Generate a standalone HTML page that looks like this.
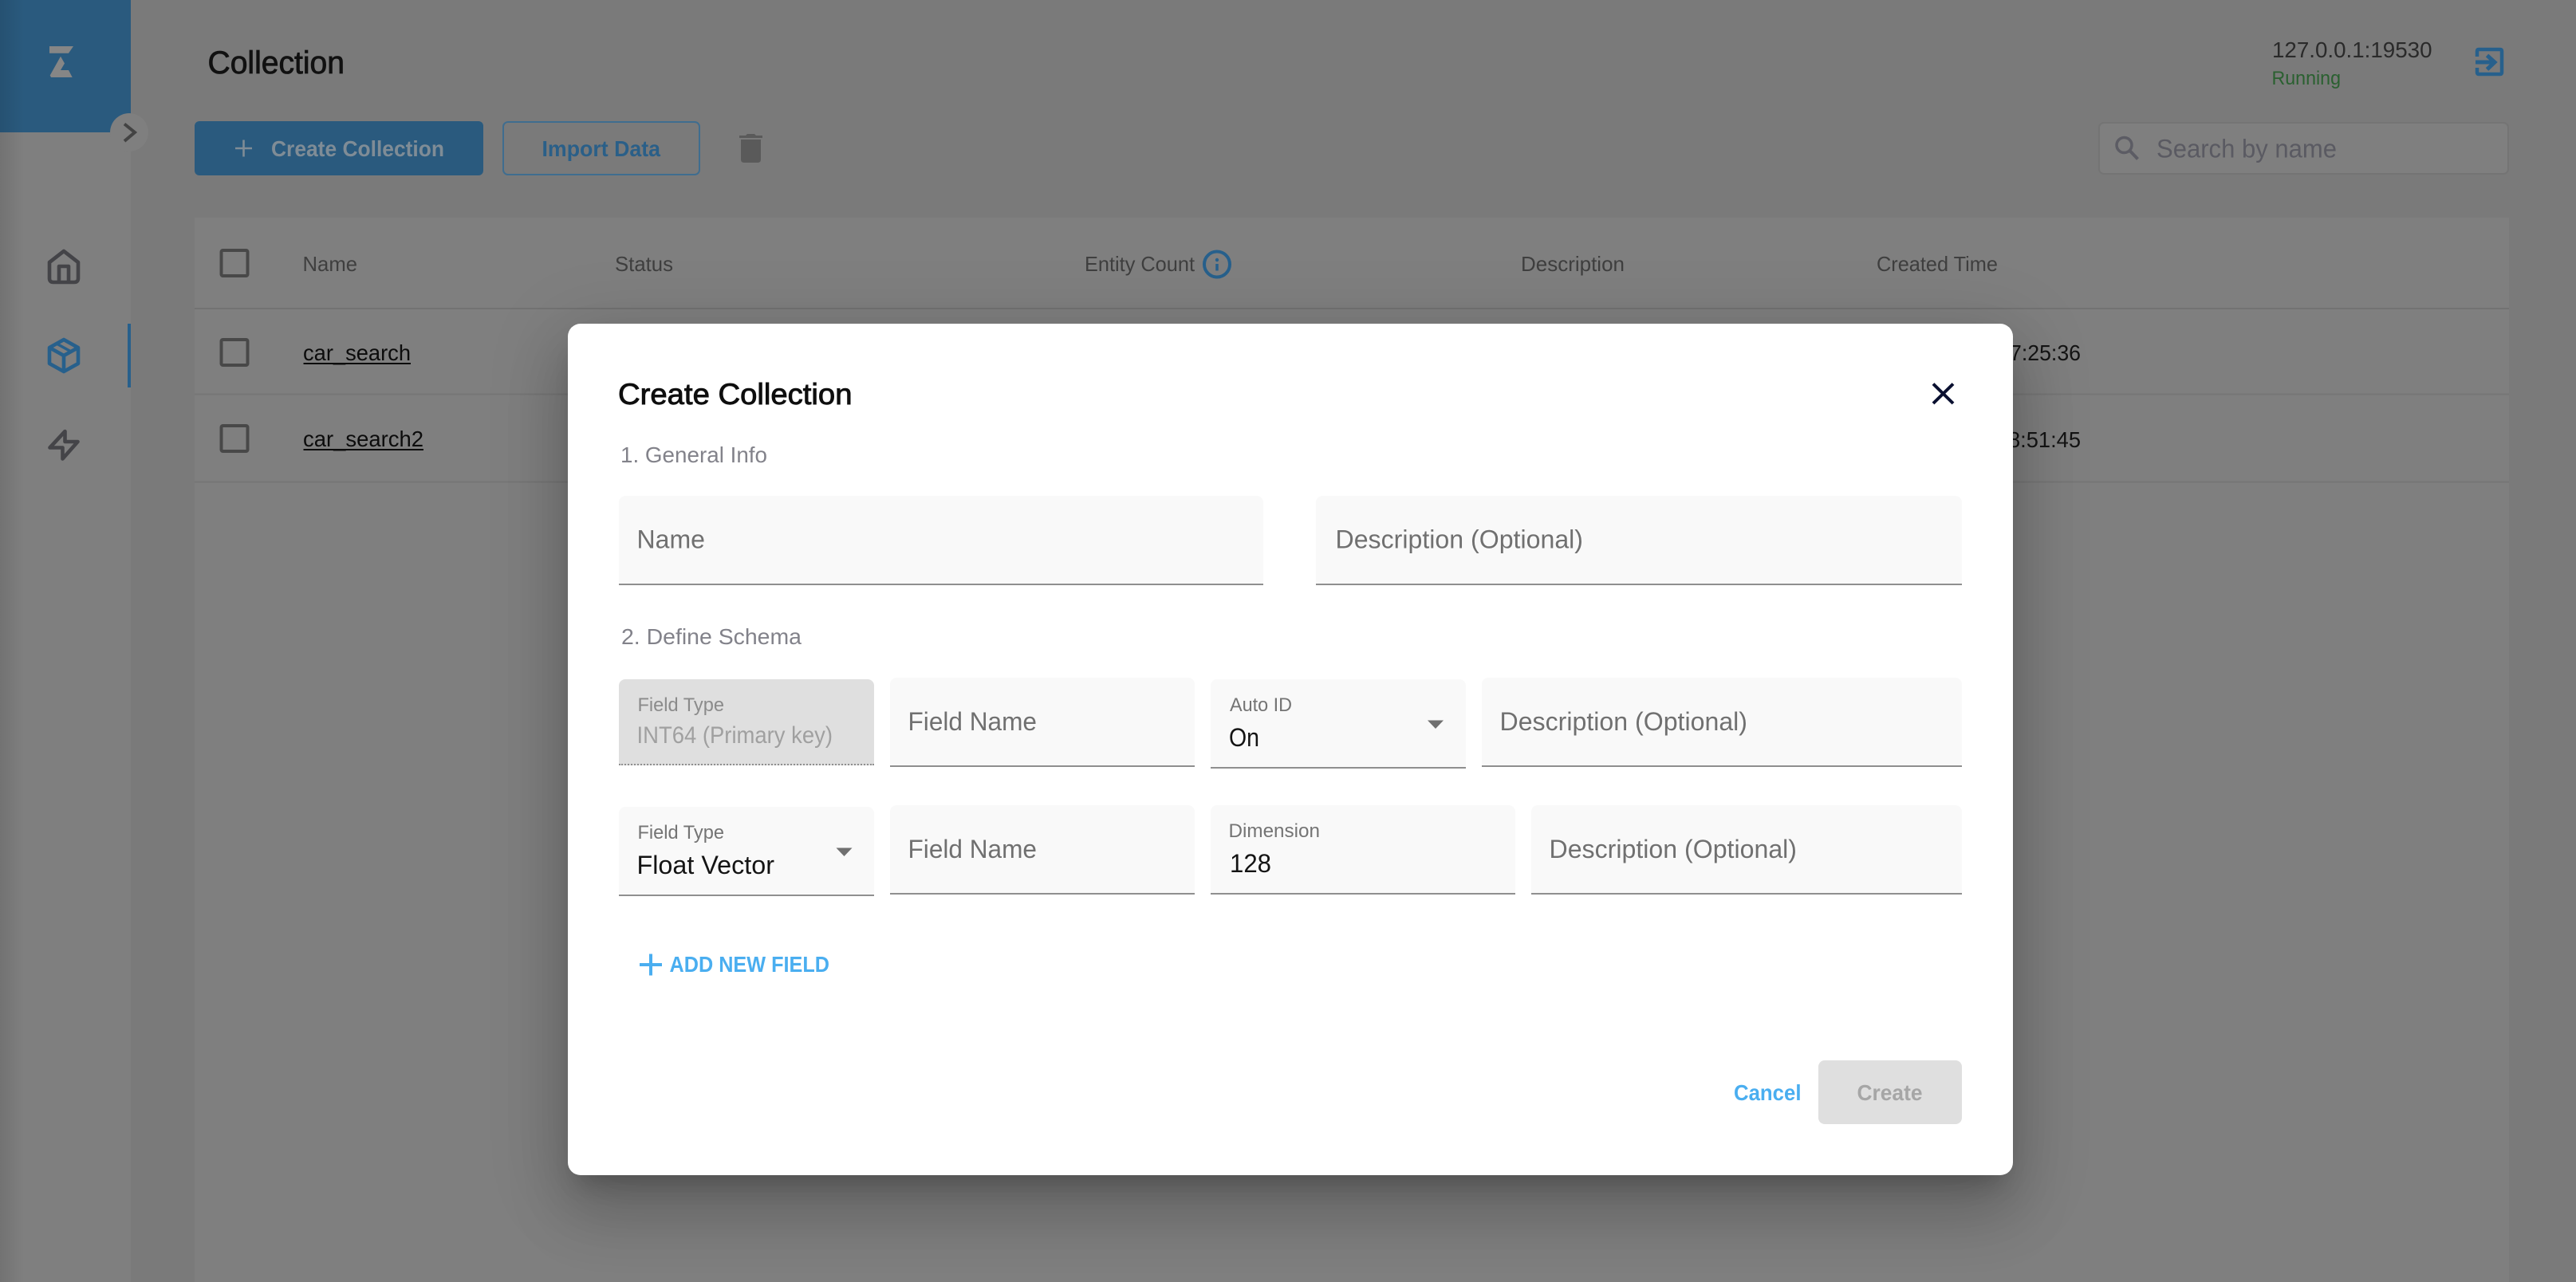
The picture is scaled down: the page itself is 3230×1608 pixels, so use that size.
<!DOCTYPE html>
<html lang="en">
<head>
<meta charset="utf-8">
<title>Collection</title>
<style>
html,body{margin:0;padding:0;width:3230px;height:1608px;overflow:hidden;background:#7a7a7a}
svg{position:absolute;left:0;top:0}
text{font-family:"Liberation Sans",sans-serif;white-space:pre}
.dialog{position:absolute;left:712px;top:406px;width:1812px;height:1068px;background:#fff;border-radius:16px;
box-shadow:0 22px 30px -14px rgba(0,0,0,.2),0 48px 76px 6px rgba(0,0,0,.14),0 18px 92px 16px rgba(0,0,0,.12)}
.f{position:absolute;box-sizing:border-box;background:#f9f9f9;border-radius:8px 8px 0 0;border-bottom:2px solid #8f8f8f}
.d{background:#dfdfdf;border-bottom:2px dotted #8f8f8f}
.b{position:absolute;left:2280px;top:1330px;width:180px;height:80px;background:#dfdfdf;border-radius:8px}
</style>
</head>
<body>
<svg width="3230" height="1608" viewBox="0 0 3230 1608">
<defs>
<linearGradient id="edge" x1="0" x2="1" y1="0" y2="0"><stop offset="0" stop-color="#000" stop-opacity=".1"/><stop offset="1" stop-color="#000" stop-opacity="0"/></linearGradient>
</defs>
<rect width="3230" height="1608" fill="#7a7a7a"/>
<rect width="164" height="1608" fill="#7f7f7f"/>
<rect y="0" width="164" height="166" fill="#2a5a7e"/>
<rect width="30" height="1608" fill="url(#edge)"/>
<circle cx="162" cy="166" r="24" fill="#7f7f7f"/>
<path d="M156 155.5L169 166L156 177" fill="none" stroke="#434343" stroke-width="4"/>
<path d="M62 58H92L86 66.7H62Z" fill="#868686"/>
<path d="M76 70.7L81 79.5L76 88H86L90.7 97H64L62.7 94.5Z" fill="#868686"/>
<g fill="none" stroke="#444448" stroke-width="4.6" stroke-linejoin="round">
<path d="M80 315L98 329V349Q98 354 93 354H67Q62 354 62 349V329Z"/>
<path d="M74 354V334H86V354"/>
<path d="M81.500 541V554H97.500L78.500 575.500V561.500H62.500Z"/>
</g>
<g fill="none" stroke="#27608c" stroke-width="4.6" stroke-linejoin="round">
<path d="M80 426L98 436V456L80 466L62 456V436Z"/>
<path d="M62 436L80 446L98 436M80 446V466"/>
<path d="M71 431L89 441" stroke-width="3.500"/>
</g>
<rect x="160" y="406" width="4" height="80" fill="#27608c"/>

<text x="260.500" y="92" font-size="40" fill="#111" stroke="#111" stroke-width=".8" textLength="171.500" lengthAdjust="spacingAndGlyphs">Collection</text>

<rect x="244" y="152" width="362" height="68" rx="6" fill="#2a5a7e"/>
<path d="M305.5 175.5V196.500M295 186H316" stroke="#7f8c96" stroke-width="2.6" fill="none"/>
<text x="340" y="196" font-size="28" font-weight="700" fill="#7f8c96" textLength="217" lengthAdjust="spacingAndGlyphs">Create Collection</text>
<rect x="631" y="153" width="246" height="66" rx="6" fill="none" stroke="#3f6d8f" stroke-width="2"/>
<text x="679.500" y="196" font-size="28" font-weight="700" fill="#2a5f88" textLength="148.500" lengthAdjust="spacingAndGlyphs">Import Data</text>
<path d="M929 175H954V200Q954 204 950 204H933Q929 204 929 200ZM927 170H935L937 168H946L948 170H956V173H927Z" fill="#5a5a5a"/>

<text x="2849" y="72" font-size="28" fill="#2a2a2a" textLength="200.500" lengthAdjust="spacingAndGlyphs">127.0.0.1:19530</text>
<text x="2848.500" y="106" font-size="24" fill="#2a6030" textLength="86.500" lengthAdjust="spacingAndGlyphs">Running</text>
<path d="M3106 71V64Q3106 62 3108 62H3135Q3137 62 3137 64V91Q3137 93 3135 93H3108Q3106 93 3106 91V85" fill="none" stroke="#27608c" stroke-width="4.500"/>
<path d="M3104 78H3128M3118.500 69.500L3128 78L3118.500 87" fill="none" stroke="#27608c" stroke-width="5"/>

<rect x="2632" y="154" width="513" height="64" rx="6" fill="#7f7f7f" stroke="#747474" stroke-width="2"/>
<circle cx="2663.500" cy="182" r="9.500" fill="none" stroke="#5c5c64" stroke-width="3.500"/>
<path d="M2670.500 189L2680.500 199.500" stroke="#5c5c64" stroke-width="4"/>
<text x="2704" y="197.500" font-size="32" fill="#5a5a62" textLength="226" lengthAdjust="spacingAndGlyphs">Search by name</text>

<rect x="244" y="273" width="2902" height="1335" fill="#7f7f7f"/>
<rect x="244" y="386" width="2902" height="2" fill="#727272"/>
<rect x="244" y="493.500" width="2902" height="2" fill="#767676"/>
<rect x="244" y="603.500" width="2902" height="2" fill="#767676"/>
<g fill="none" stroke="#484848" stroke-width="4">
<rect x="277.500" y="314" width="33" height="32" rx="2"/>
<rect x="277.500" y="426" width="33" height="32" rx="2"/>
<rect x="277.500" y="534" width="33" height="32" rx="2"/>
</g>
<g font-size="26" fill="#3f3f3f">
<text x="379.500" y="340" textLength="68.500" lengthAdjust="spacingAndGlyphs">Name</text>
<text x="771" y="340" textLength="73" lengthAdjust="spacingAndGlyphs">Status</text>
<text x="1360" y="340" textLength="138" lengthAdjust="spacingAndGlyphs">Entity Count</text>
<text x="1907" y="340" textLength="130" lengthAdjust="spacingAndGlyphs">Description</text>
<text x="2353" y="340" textLength="152" lengthAdjust="spacingAndGlyphs">Created Time</text>
</g>
<circle cx="1526" cy="331.500" r="16" fill="none" stroke="#27608c" stroke-width="4"/>
<circle cx="1526" cy="326" r="2.200" fill="#27608c"/>
<path d="M1526 331V339.500" stroke="#27608c" stroke-width="3.500"/>
<text x="380" y="452" font-size="28" fill="#0c0c0c" textLength="135" lengthAdjust="spacingAndGlyphs">car_search</text>
<rect x="380.500" y="455" width="134.500" height="2" fill="#0c0c0c"/>
<text x="380" y="560" font-size="28" fill="#0c0c0c" textLength="151" lengthAdjust="spacingAndGlyphs">car_search2</text>
<rect x="380.500" y="563" width="150.500" height="2" fill="#0c0c0c"/>
<text x="2520" y="452" font-size="28" fill="#141414" textLength="89" lengthAdjust="spacingAndGlyphs">7:25:36</text>
<text x="2518" y="561" font-size="28" fill="#141414" textLength="91" lengthAdjust="spacingAndGlyphs">8:51:45</text>
</svg>

<div class="dialog"></div>
<div class="f" style="left:776px;top:622px;width:808px;height:112px"></div>
<div class="f" style="left:1650px;top:622px;width:810px;height:112px"></div>
<div class="f d" style="left:776px;top:852px;width:320px;height:108px"></div>
<div class="f" style="left:1116px;top:850px;width:382px;height:112px"></div>
<div class="f" style="left:1518px;top:852px;width:320px;height:112px"></div>
<div class="f" style="left:1858px;top:850px;width:602px;height:112px"></div>
<div class="f" style="left:776px;top:1012px;width:320px;height:112px"></div>
<div class="f" style="left:1116px;top:1010px;width:382px;height:112px"></div>
<div class="f" style="left:1518px;top:1010px;width:382px;height:112px"></div>
<div class="f" style="left:1920px;top:1010px;width:540px;height:112px"></div>
<div class="b"></div>

<svg width="3230" height="1608" viewBox="0 0 3230 1608">
<text x="775" y="507" font-size="37" fill="#0e0e0e" stroke="#0e0e0e" stroke-width=".9" textLength="293.500" lengthAdjust="spacingAndGlyphs">Create Collection</text>
<path d="M2424 481.500L2449 506M2449 481.500L2424 506" stroke="#0a1030" stroke-width="4" fill="none"/>
<text x="778" y="580" font-size="28" fill="#82828a" textLength="184" lengthAdjust="spacingAndGlyphs">1. General Info</text>
<text x="779" y="808" font-size="28" fill="#82828a" textLength="226" lengthAdjust="spacingAndGlyphs">2. Define Schema</text>

<g font-size="32" fill="#707070">
<text x="798.500" y="687.500" textLength="85.500" lengthAdjust="spacingAndGlyphs">Name</text>
<text x="1674.500" y="687.500" textLength="310.500" lengthAdjust="spacingAndGlyphs">Description (Optional)</text>
<text x="1138.500" y="916" textLength="161.500" lengthAdjust="spacingAndGlyphs">Field Name</text>
<text x="1880.500" y="916" textLength="310.500" lengthAdjust="spacingAndGlyphs">Description (Optional)</text>
<text x="1138.500" y="1076" textLength="161.500" lengthAdjust="spacingAndGlyphs">Field Name</text>
<text x="1942.500" y="1076" textLength="310.500" lengthAdjust="spacingAndGlyphs">Description (Optional)</text>
</g>

<g font-size="24" fill="#747474">
<text x="799.500" y="892" fill="#8b8b8b" textLength="108.500" lengthAdjust="spacingAndGlyphs">Field Type</text>
<text x="1542" y="892" textLength="78" lengthAdjust="spacingAndGlyphs">Auto ID</text>
<text x="799.500" y="1052" textLength="108.500" lengthAdjust="spacingAndGlyphs">Field Type</text>
<text x="1540.500" y="1050" textLength="114.500" lengthAdjust="spacingAndGlyphs">Dimension</text>
</g>

<text x="798.500" y="932" font-size="30" fill="#a0a0a0" textLength="245.500" lengthAdjust="spacingAndGlyphs">INT64 (Primary key)</text>
<text x="1541" y="936" font-size="32" fill="#141414" textLength="38" lengthAdjust="spacingAndGlyphs">On</text>
<text x="798.500" y="1096" font-size="32" fill="#141414" textLength="172.500" lengthAdjust="spacingAndGlyphs">Float Vector</text>
<text x="1542" y="1094" font-size="32" fill="#141414" textLength="52" lengthAdjust="spacingAndGlyphs">128</text>

<path d="M1790 903.500H1810L1800 914Z" fill="#707070"/>
<path d="M1048.500 1063.500H1068.500L1058.500 1074Z" fill="#707070"/>

<path d="M816 1196.500V1223.500M802 1210H830" stroke="#4aaef0" stroke-width="4" fill="none"/>
<text x="839.500" y="1219" font-size="28" font-weight="700" fill="#4aaef0" textLength="200.500" lengthAdjust="spacingAndGlyphs">ADD NEW FIELD</text>
<text x="2174" y="1380" font-size="28" font-weight="700" fill="#4aaef0" textLength="84.500" lengthAdjust="spacingAndGlyphs">Cancel</text>
<text x="2328.500" y="1380" font-size="28" font-weight="700" fill="#a6a6a6" textLength="82" lengthAdjust="spacingAndGlyphs">Create</text>
</svg>
</body>
</html>
